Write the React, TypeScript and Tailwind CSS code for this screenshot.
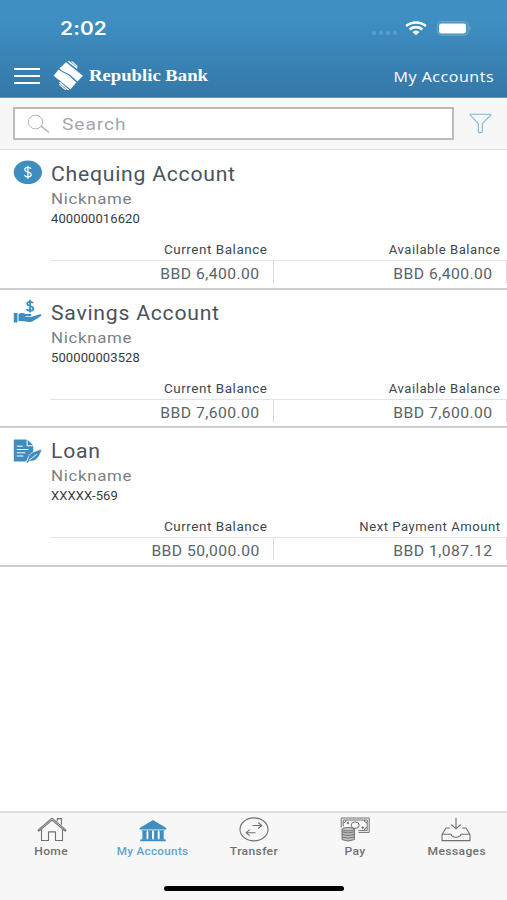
import React from 'react';

const sans = "font-['Roboto','Liberation_Sans',sans-serif]";

function Logo() {
  return (
    <svg className="ml-[13px] h-[30px] w-[31px] shrink-0" viewBox="0 0 31 30" fill="#fff">
      <path d="M6.4 7.4 13 1.2 29.9 14.7 24.4 20.4C20.9 17.6 18.6 14.300 14.900 12.400 11.900 10.900 8.900 9.900 6.400 7.400Z" />
      <path d="M.6 14.7 5.600 8.500C8.900 11.300 11.500 11.800 14.300 13.500 17.800 15.700 19.800 19 23.500 21.300L17.400 28.200Z" />
      <path d="M14.300.3h2.300L24.500 6.800l-.9.900Z" />
      <path d="M18 .6h1.500l5.400 4.600-.8.800Z" />
      <path d="M6 21.600 7 20.700l9.400 8.200h-2.100Z" />
      <path d="m5.800 23.500.9-.7 6.600 6.100h-1.400Z" />
    </svg>
  );
}

function StatusBar() {
  return (
    <div className="flex h-[56px] items-start pl-[60px] pr-[35px] pt-[18px] text-white">
      <span className={"origin-left scale-x-[1.1] text-[19px] font-semibold leading-[22px] tracking-[0.1px] font-['Inter',sans-serif]"}>2:02</span>
      <div className="ml-auto flex items-center pt-[3px]">
        <div className="mr-[8px] mt-[9px] flex gap-[3px]">
          {[0, 1, 2, 3].map((i) => (
            <i key={i} className="h-[4px] w-[4px] rounded-full bg-[#5f9fcb]" />
          ))}
        </div>
        <svg className="mr-[9px] h-[15px] w-[22px]" viewBox="0 0 22 15" fill="none" stroke="#fff" strokeWidth="2.6">
          <path d="M1.1 5.1C6.7.2 15.3.2 20.9 5.1M4.6 8.5C8.1 5.3 13.9 5.3 17.4 8.5" />
          <path d="M7.4 11.1Q11 8 14.6 11.1L11 14.3Z" fill="#fff" stroke="none" />
        </svg>
        <svg className="h-[15px] w-[36px]" viewBox="0 0 36 15">
          <rect x="1.3" y=".7" width="31" height="13.4" rx="4" fill="none" stroke="#73add3" strokeWidth="1" />
          <rect x="3.1" y="2.4" width="27" height="10" rx="2.2" fill="#fff" />
          <path d="M33.600 5q2.200 2.400 0 4.800Z" fill="#85b8d9" />
        </svg>
      </div>
    </div>
  );
}

function Header() {
  return (
    <header className="h-[98px] shrink-0 border-b border-[#5c9bc4] bg-linear-to-b from-[#3f8fc3] from-20% to-[#3478a8]">
      <StatusBar />
      <div className="flex h-[40px] items-center pl-[14px] pr-[13px] text-white">
        <div className="flex w-[26px] flex-col gap-[5px]">
          <i className="h-[2px] bg-white" />
          <i className="h-[2px] bg-white" />
          <i className="h-[2px] bg-white" />
        </div>
        <Logo />
        <span className="ml-[5px] origin-left scale-x-[1.1] whitespace-nowrap text-[17px] font-bold leading-[20px] font-['Liberation_Serif',serif]">Republic Bank</span>
        <span className="ml-auto origin-right scale-x-[1.07] whitespace-nowrap text-[15px] leading-[20px] tracking-[0.5px] font-['Open_Sans',sans-serif]">My Accounts</span>
      </div>
    </header>
  );
}

function Search() {
  return (
    <div className="flex h-[52px] shrink-0 items-center border-b border-[#dedede] bg-[#f7f7f7] pl-[13px] pr-[15px]">
      <div className="flex h-[33px] w-[441px] items-center border-2 border-[#bcbcbc] bg-white pl-[12px]">
        <svg className="h-[20px] w-[23px]" viewBox="0 0 23 20" fill="none" stroke="#b5b5b5" strokeWidth="1">
          <ellipse cx="8.5" cy="8" rx="7.3" ry="6.8" />
          <path d="m14 12.2 8 6.2" strokeWidth="1.5" />
        </svg>
        <span className={`ml-[12px] mt-[2px] origin-left scale-x-[1.13] text-[17px] tracking-[0.8px] text-[#a5a7aa] ${sans}`}>Search</span>
      </div>
      <svg className="ml-auto h-[21px] w-[23px]" viewBox="0 0 23 21" fill="none" stroke="#7bb6d9" strokeWidth="1.1" strokeLinejoin="round">
        <path d="M1.2 1.2h20.6v.9l-8.5 8.6v8.4q-2 1-4 0v-8.4L1.2 2Z" />
      </svg>
    </div>
  );
}

function ChequingIcon() {
  return (
    <svg className="h-[25px] w-[29px]" viewBox="0 0 29 25">
      <ellipse cx="14.9" cy="12.3" rx="14.1" ry="11.8" fill="#3d8dc1" />
      <path d="M18 8.9c-.6-1.1-1.7-1.5-3.1-1.5-1.8 0-3.1.8-3.1 2.2 0 3.2 6.4 1.8 6.4 5 0 1.5-1.4 2.4-3.3 2.4-1.7 0-3-.7-3.4-1.9M14.9 5.7v13" stroke="#fff" strokeWidth="1.25" fill="none" />
    </svg>
  );
}

function SavingsIcon() {
  return (
    <svg className="h-[25px] w-[29px]" viewBox="0 0 29 25" fill="#3d8dc1">
      <path d="M20 4.2c-.5-1-1.5-1.4-2.9-1.4-1.8 0-2.9.8-2.9 2 0 3 6 1.6 6 4.6 0 1.5-1.3 2.3-3.1 2.3-1.8 0-3-.7-3.3-1.8M17.1.8v12.6" stroke="#3d8dc1" strokeWidth="1.8" fill="none" />
      <path d="M.8 14h3.7v9.4H.8ZM5.5 14.7c3-1.3 5.1-.5 7.2.3h4.4c1.8 0 1.9 2.2 0 2.2h-4.7v.8h5.1c1.3 0 2.6-.5 3.8-.9l5.6-1.8c1.5-.4 2.1.8.9 1.6-3 2-5 3.5-8.2 5.3-3.8 2-7.1-.2-11-.1H5.5Z" />
    </svg>
  );
}

function LoanIcon() {
  return (
    <svg className="mt-[1.5px] h-[25px] w-[29px]" viewBox="0 0 29 25" fill="#3d8dc1">
      <path d="M.8.6h12.8v6.7h6.7v8.2c-4 2-6.6 4-6.9 6.9H.8Z" />
      <path d="m14.6.8 5.6 5.4h-5.6Z" />
      <path d="M3.8 7.2h6M3.8 10.5h11.6M3.8 13.8h8.6M3.8 17h6.6" stroke="#fff" strokeWidth="1" />
      <path d="M29 10.3c-7 1.4-13.9 4-14.1 9.7l-1.7 3.6 1.5.7 1.8-2.2c6.6 1 10.3-4.6 12.5-11.8Z" stroke="#fff" strokeWidth=".7" />
      <path d="m16.3 21 7.4-5.6" stroke="#fff" strokeWidth=".9" />
    </svg>
  );
}

function Balance({ label, value, last }: { label: string; value: string; last?: boolean }) {
  return (
    <div className={last ? 'w-[233px]' : 'w-[224px]'}>
      <div className={`flex h-[19px] justify-end border-b border-[#e2e4e6] ${last ? 'pr-[6.5px]' : 'pr-[6px]'}`}>
        <span className={`origin-right whitespace-nowrap text-[12px] leading-[17px] tracking-[0.5px] text-[#3d4650] ${last ? 'scale-x-[1.09]' : 'scale-x-[1.12]'} ${sans}`}>{label}</span>
      </div>
      <div className="flex h-[22px] items-center justify-end border-r-[1.5px] border-[#d5d7d9] pr-[13px]">
        <span className={`mt-[4px] origin-right scale-x-[1.12] whitespace-nowrap text-[14px] leading-[22px] tracking-[0.4px] text-[#5c626a] ${sans}`}>{value}</span>
      </div>
    </div>
  );
}

type Account = { icon: React.ReactNode; name: string; number: string; left: string; rightLabel: string; right: string };

const accounts: Account[] = [
  { icon: <ChequingIcon />, name: 'Chequing Account', number: '400000016620', left: 'BBD 6,400.00', rightLabel: 'Available Balance', right: 'BBD 6,400.00' },
  { icon: <SavingsIcon />, name: 'Savings Account', number: '500000003528', left: 'BBD 7,600.00', rightLabel: 'Available Balance', right: 'BBD 7,600.00' },
  { icon: <LoanIcon />, name: 'Loan', number: 'XXXXX-569', left: 'BBD 50,000.00', rightLabel: 'Next Payment Amount', right: 'BBD 1,087.12' },
];

function Row({ a }: { a: Account }) {
  return (
    <section className="flex h-[138.5px] shrink-0 flex-col border-b-2 border-[#cdcdcd] bg-white">
      <div className="flex h-[91px] pl-[13px] pt-[9px]">
        <div className="w-[37.5px]">{a.icon}</div>
        <div className={`flex flex-col items-start ${sans}`}>
          <span className="origin-left scale-x-[1.06] text-[20px] leading-[28px] tracking-[0.7px] text-[#4b525b]">{a.name}</span>
          <span className="origin-left scale-x-[1.09] text-[15.5px] leading-[22px] tracking-[0.6px] text-[#7b7f85]">Nickname</span>
          <span className="origin-left scale-x-[1.04] text-[12.5px] leading-[18px] tracking-[0.1px] text-[#363b42]">{a.number}</span>
        </div>
      </div>
      <div className="flex pl-[50px]">
        <Balance label="Current Balance" value={a.left} />
        <Balance label={a.rightLabel} value={a.right} last />
      </div>
    </section>
  );
}

function HomeIcon() {
  return (
    <svg className="h-[25px] w-[30px]" viewBox="0 0 30 25" fill="none" stroke="#707070" strokeWidth="1.1" strokeLinejoin="round">
      <path d="m1 13.2 14-12 14 12-.9 1L15 3.2 1.9 14.2ZM20.3 4.2V1.6h4.1v6.2M4.5 12.5v11h7v-8.6h7v8.6h7v-11" />
    </svg>
  );
}

function BankIcon() {
  return (
    <svg className="h-[25px] w-[30px]" viewBox="0 0 30 25" fill="#3d8dc1">
      <path d="M15 3 28.3 11v1.6H1.7V11ZM2.2 22.6h25.6v1.600H2.200Z" />
      <path d="M3.7 13.3h5.5v1h-.7v7.400h.7v1H3.700v-1h.7v-7.400h-.7ZM9.800 13.300h4.800v1H14v7.400h.6v1H9.800v-1h.6v-7.400h-.6ZM15.500 13.300h4.800v1h-.6v7.400h.6v1h-4.800v-1h.6v-7.400h-.6ZM21 13.300h5.400v1h-.7v7.400h.7v1H21v-1h.7v-7.400H21Z" />
    </svg>
  );
}

function TransferIcon() {
  return (
    <svg className="h-[25px] w-[30px]" viewBox="0 0 30 25" fill="none" stroke="#707070" strokeWidth="1.1">
      <ellipse cx="15" cy="12.4" rx="14" ry="11.5" />
      <path d="M13.5 8.5h9m-3.3-3 3.5 3-3.5 3M16.5 15.7H7.4m3.3-3-3.5 3 3.5 3" />
    </svg>
  );
}

function PayIcon() {
  return (
    <svg className="h-[25px] w-[30px]" viewBox="0 0 30 25" fill="none" stroke="#707070" strokeWidth="1">
      <path d="M1.2 10.5V1h28v14.4H18.5M3.2 9.5V3h24v10.4h-8.7" />
      <path d="M3.3 6Q6 5.7 6.2 3M24.2 3q.2 2.5 3 3M27 10.5q-2.6.2-2.8 2.7" />
      <ellipse cx="15.2" cy="8.2" rx="4" ry="3.3" />
      <circle cx="8" cy="6" r=".8" fill="#707070" />
      <circle cx="22.7" cy="10.6" r=".8" fill="#707070" />
      <path d="M2 12.2v10.4q6 2.8 12.4 0V12.2" fill="#c2c2c2" />
      <ellipse cx="8.2" cy="12.2" rx="6.2" ry="1.7" fill="#c2c2c2" />
      <path d="M2 14.8q6 2.4 12.4 0M2 17.4q6 2.4 12.4 0M2 20q6 2.4 12.4 0" />
    </svg>
  );
}

function MessagesIcon() {
  return (
    <svg className="h-[25px] w-[30px]" viewBox="0 0 30 25" fill="none" stroke="#707070" strokeWidth="1.1" strokeLinejoin="round">
      <path d="M15 .7v11M10.2 7.5l4.8 4.3 4.8-4.3M9 11H5L1 17.5v6.1h28v-6.1L25 11h-4M1 17.2h9q.5 3 5 3t5-3h9" />
    </svg>
  );
}

const tabs = [
  { label: 'Home', icon: <HomeIcon /> },
  { label: 'My Accounts', icon: <BankIcon />, active: true },
  { label: 'Transfer', icon: <TransferIcon /> },
  { label: 'Pay', icon: <PayIcon /> },
  { label: 'Messages', icon: <MessagesIcon /> },
];

export default function App() {
  return (
    <div className="flex h-[900px] w-[507px] flex-col overflow-hidden bg-white">
      <Header />
      <Search />
      <main className="flex-1 pt-[1px]">
        {accounts.map((a) => (
          <Row key={a.name} a={a} />
        ))}
      </main>
      <footer className="flex h-[89px] shrink-0 flex-col items-center border-t-2 border-[#dfdfdf] bg-[#f7f7f7]">
        <nav className="flex h-[73px] w-full pl-[1px] pt-[4px]">
          {tabs.map((t) => (
            <div key={t.label} className="flex flex-1 flex-col items-center">
              {t.icon}
              <span className={`mt-px whitespace-nowrap text-[11.5px] font-medium leading-[16px] tracking-[0.35px] ${sans} ${t.active ? 'scale-x-[1.01] text-[#5ba3d2]' : 'scale-x-[1.05] text-[#707070]'}`}>{t.label}</span>
            </div>
          ))}
        </nav>
        <div className="h-[5px] w-[180px] rounded-full bg-black" />
      </footer>
    </div>
  );
}
